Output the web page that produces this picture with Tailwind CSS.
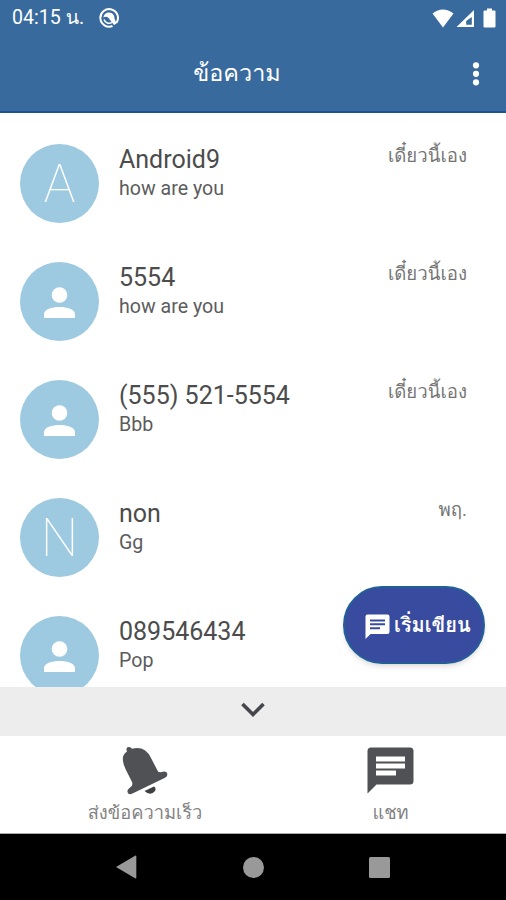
<!DOCTYPE html>
<html lang="th">
<head>
    <meta charset="UTF-8" />
    <meta name="viewport" content="width=device-width, initial-scale=1.0"/>
    <title>ข้อความ</title>
    <script src="https://cdn.jsdelivr.net/npm/@tailwindcss/browser@4"></script>
    <style>
        body { font-family: Roboto, Loma, Garuda, Umpush, Waree, 'Noto Sans Thai Looped', 'Noto Sans Thai', 'Noto Sans', sans-serif; }
    </style>
</head>
<body class="bg-white">
    <div class="relative flex flex-col w-[506px] h-[900px] overflow-hidden">
        <header class="h-[113px] shrink-0 bg-[#386a9e] border-b-2 border-[#1d5390] text-white">
            <!-- Status bar -->
            <div class="h-9 pl-3 pr-2.5 flex items-center">
                <span class="text-[19.6px] leading-none whitespace-nowrap w-[87px]">04:15 น.</span>
                <svg class="w-5 h-5" viewBox="0 0 20 20" fill="none" stroke="currentColor">
                    <path d="M13.5 18A8.8 8.8 0 1 1 17.3 15" stroke-width="2"/>
                    <path d="M13 14.4A5.3 5.3 0 0 1 5 11.5" stroke-width="1.5"/>
                    <path fill="currentColor" stroke="none" d="M4.3 9.5Q5.5 4.5 10 4.5Q15.5 4.8 15.5 10.5L17.5 15.5L15 17L9.5 10Q7.5 8 4.3 9.5Z"/>
                </svg>
                <div class="ml-auto flex items-center">
                    <svg class="w-[22px] h-[19px]" viewBox="0 0 22 19" fill="currentColor"><path d="M0.5 4.5Q11-3.5 21.5 4.5L11 18.5Z"/></svg>
                    <svg class="ml-0.5 w-[19px] h-[19px]" viewBox="0 0 19 19"><path fill="currentColor" fill-rule="evenodd" d="M18 1V18H0.5ZM15.8 8L10.2 12V15.7H15.8Z"/></svg>
                    <svg class="ml-2 w-[13px] h-5" viewBox="0 0 13 20" fill="currentColor"><path d="M4 0.5H9V2.5H11.5Q12.5 2.5 12.5 3.5V18.5Q12.5 19.5 11.5 19.5H1.5Q0.5 19.5 0.5 18.5V3.5Q0.5 2.5 1.5 2.5H4Z"/></svg>
                </div>
            </div>
            <!-- Title bar -->
            <div class="h-[75px] grid grid-cols-[1fr_auto_1fr] items-center pr-[26px]">
                <span></span>
                <h1 class="text-[23.4px] font-medium leading-none -ml-1.5">ข้อความ</h1>
                <svg class="justify-self-end w-2 h-6" viewBox="0 0 8 24" fill="currentColor">
                    <circle cx="4" cy="3.3" r="3.1"/><circle cx="4" cy="11.8" r="3.1"/><circle cx="4" cy="20.3" r="3.1"/>
                </svg>
            </div>
        </header>

        <main id="list" class="h-[574px] shrink-0 overflow-hidden pt-[31px] pl-5 pr-[39px]">
            <!-- Conversations will be inserted by JS -->
        </main>

        <div class="h-[49px] shrink-0 bg-[#ededed] flex items-center justify-center">
            <svg class="w-6 h-4 -mt-[3px]" viewBox="0 0 24 16" fill="none" stroke="#45464b" stroke-width="3.6"><path d="M1.5 2L12 12.5L22.5 2"/></svg>
        </div>

        <nav class="h-[98px] shrink-0 pl-2 grid grid-cols-2 text-[18.3px] leading-6 text-[#828282] border-b border-[#aaa]">
            <div class="flex flex-col items-center pt-2.5 w-[274px]">
                <svg class="w-[46px] h-[50px]" viewBox="0 0 46 50" fill="#505155">
                    <path d="M4.5 4Q4 0.8 7 1Q9 1 10 2.8Q23-0.5 29 12L36 25.5Q37.5 27 42 25.5Q45.5 25.5 45.3 29Q45 31 42.5 32L10.5 47.5Q6.5 49.5 5.5 46Q5 43.5 7.5 42Q11.5 40 10 36L3.5 23Q-2.5 10 5 5.5Z"/>
                    <path d="M22.5 45L32 40.5Q34.5 42 33 45Q28.5 50.5 22.5 45Z" fill="#3f4044"/>
                </svg>
                <span class="mt-[5px]">ส่งข้อความเร็ว</span>
            </div>
            <div class="flex flex-col items-center pt-[11px] w-[267px]">
                <svg class="w-[47px] h-[47px]" viewBox="0 0 47 47" fill="#505155">
                    <path fill-rule="evenodd" d="M4 0.5H43Q46.5 0.5 46.5 4V34Q46.5 37.5 43 37.5H9.5L0.5 46.5V4Q0.5 0.5 4 0.5ZM9 9.5V14.5H38V9.5ZM9 16.5V21.5H38V16.5ZM9 23.5V28.5H29V23.5Z"/>
                </svg>
                <span class="mt-[7px]">แชท</span>
            </div>
        </nav>

        <!-- System navigation -->
        <footer class="grow bg-black flex items-center justify-center gap-[105px]">
            <svg class="w-[22px] h-6 -ml-px mr-px" viewBox="0 0 22 24" fill="#999"><path d="M1 12L20.5 0.5Q21.3 0.3 21.3 1.2V22.8Q21.3 23.7 20.5 23.5Z"/></svg>
            <div class="w-[21px] h-[21px] rounded-full bg-[#999]"></div>
            <div class="w-[21px] h-[21px] rounded-[1.5px] bg-[#999]"></div>
        </footer>

        <button class="absolute left-[343px] top-[586px] w-[142px] h-[78px] pl-5 flex items-center gap-1 rounded-full bg-[#384b9e] border-2 border-[#225f99] text-white shadow-md">
            <svg class="w-[25px] h-[25px] shrink-0 mt-0.5" viewBox="0 0 25 25" fill="currentColor">
                <path fill-rule="evenodd" d="M2.5 0.5H22.5Q24.5 0.5 24.5 2.5V18Q24.5 20 22.5 20H5.5L0.5 25V2.5Q0.5 0.5 2.5 0.5ZM5 5.5V7.5H20V5.5ZM5 9.3V11.3H20V9.3ZM5 13.2V15.2H15V13.2Z"/>
            </svg>
            <span class="text-[20px] leading-none font-bold whitespace-nowrap">เริ่มเขียน</span>
        </button>
    </div>

    <script>
        const conversations = [
            { name: "Android9", text: "how are you", time: "เดี๋ยวนี้เอง", letter: "A" },
            { name: "5554", text: "how are you", time: "เดี๋ยวนี้เอง" },
            { name: "(555) 521-5554", text: "Bbb", time: "เดี๋ยวนี้เอง" },
            { name: "non", text: "Gg", time: "พฤ.", letter: "N" },
            { name: "089546434", text: "Pop", time: "" }
        ];

        const personIcon = `<svg class="w-[31px] h-[31px] mt-px" viewBox="0 0 31 31" fill="currentColor"><circle cx="15.5" cy="8" r="7.8"/><path d="M0 31V27C0 17.5 31 17.5 31 27V31Z"/></svg>`;

        document.getElementById('list').innerHTML = conversations.map(c => `
            <div class="h-[118px] flex items-start">
                <div class="w-[79px] h-[79px] shrink-0 rounded-full bg-[#9dcae1] text-white flex items-center justify-center">
                    ${c.letter ? `<span class="text-[53px] leading-none font-thin mt-0.5">${c.letter}</span>` : personIcon}
                </div>
                <div class="ml-5 text-[#4c4c4c]">
                    <p class="text-[25px] leading-[31px]">${c.name}</p>
                    <p class="text-[19.6px] leading-7 text-[#5c5c5c]">${c.text}</p>
                </div>
                <span class="ml-auto text-[18.6px] leading-6 text-[#757575] whitespace-nowrap">${c.time}</span>
            </div>
        `).join('');
    </script>
</body>
</html>
